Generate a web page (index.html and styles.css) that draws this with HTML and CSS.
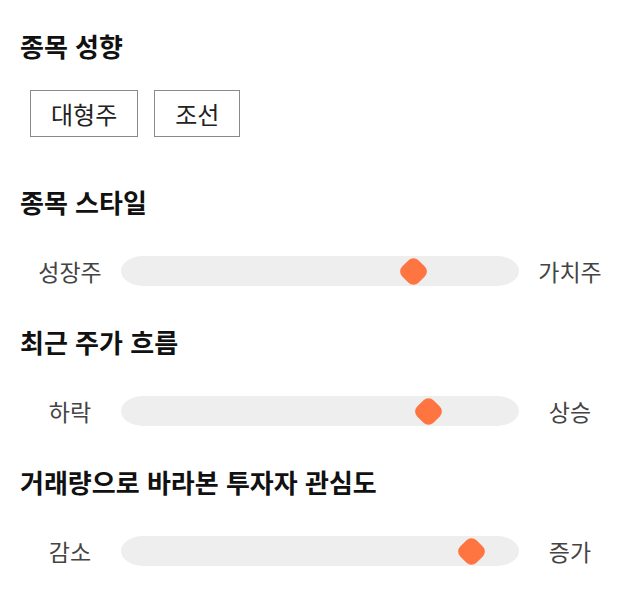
FILE: index.html
```html
<!DOCTYPE html>
<html lang="ko">
<head>
<meta charset="utf-8">
<title>종목 정보</title>
<link rel="stylesheet" href="styles.css">
</head>
<body>
<main class="panel">
  <section class="section section-tags">
    <h2 class="section-title">종목 성향</h2>
    <div class="tags">
      <span class="tag">대형주</span>
      <span class="tag">조선</span>
    </div>
  </section>
  <section class="section">
    <h2 class="section-title">종목 스타일</h2>
    <div class="slider-row">
      <span class="slider-label">성장주</span>
      <div class="track"><span class="thumb" style="left: 73.6%"></span></div>
      <span class="slider-label">가치주</span>
    </div>
  </section>
  <section class="section">
    <h2 class="section-title">최근 주가 흐름</h2>
    <div class="slider-row">
      <span class="slider-label">하락</span>
      <div class="track"><span class="thumb" style="left: 77.3%"></span></div>
      <span class="slider-label">상승</span>
    </div>
  </section>
  <section class="section">
    <h2 class="section-title">거래량으로 바라본 투자자 관심도</h2>
    <div class="slider-row">
      <span class="slider-label">감소</span>
      <div class="track"><span class="thumb" style="left: 88%"></span></div>
      <span class="slider-label">증가</span>
    </div>
  </section>
</main>
</body>
</html>
```

FILE: styles.css
```css
* { box-sizing: border-box; }

html, body {
  margin: 0;
  background: #ffffff;
}

body {
  font-family: "Noto Sans CJK KR", "Noto Sans", sans-serif;
  color: #111111;
  padding: 29px 20px 0;
}

.panel {
  display: flex;
  flex-direction: column;
}

.section + .section {
  margin-top: 39px;
}

.section-tags + .section {
  margin-top: 48px;
}

.section-title {
  margin: 0;
  font-size: 26px;
  line-height: 34px;
  font-weight: 700;
  color: #111111;
}

.tags {
  display: flex;
  gap: 16px;
  margin: 27px 0 0 10px;
}

.tag {
  display: inline-block;
  border: 1px solid #8a8a8a;
  padding: 6px 20px;
  font-size: 24px;
  line-height: 33px;
  color: #222222;
}

.slider-row {
  display: grid;
  grid-template-columns: 100px 1fr 100px;
  align-items: center;
  margin-top: 37px;
  height: 30px;
}

.slider-label {
  text-align: center;
  font-size: 23px;
  line-height: 30px;
  color: #444444;
}

.track {
  position: relative;
  height: 30px;
  margin-left: 1px;
  margin-right: 1px;
  background: #eeeeee;
  border-radius: 22px / 15px;
}

.thumb {
  position: absolute;
  top: 50%;
  width: 23px;
  height: 23px;
  margin-left: -11.5px;
  margin-top: -11.5px;
  background: #ff7542;
  border-radius: 7px;
  transform: rotate(45deg);
}
```
